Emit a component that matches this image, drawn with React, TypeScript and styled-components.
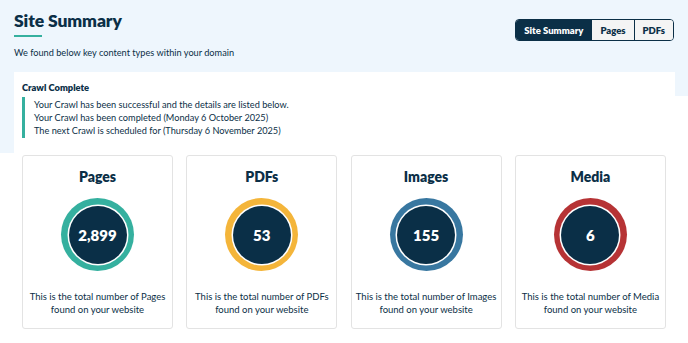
import React from 'react';
import styled, { createGlobalStyle } from 'styled-components';

interface Stat {
  title: string;
  value: string;
  ring: string;
}

const stats: Stat[] = [
  { title: 'Pages', value: '2,899', ring: '#35b09f' },
  { title: 'PDFs', value: '53', ring: '#f4b53a' },
  { title: 'Images', value: '155', ring: '#3877a0' },
  { title: 'Media', value: '6', ring: '#b63335' },
];

const GlobalStyle = createGlobalStyle`
  html, body {
    margin: 0;
    padding: 0;
    background: #ffffff;
    font-family: Lato, "Open Sans", sans-serif;
    color: #0b2f47;
  }
`;

const Page = styled.div`
  position: relative;
  width: 688px;
  height: 343px;
  overflow: hidden;
`;

const Backdrop = styled.div`
  position: absolute;
  inset: 0 0 auto 0;
  height: 153px;
  background: #eef6fd;
  clip-path: polygon(0 0, 100% 0, 100% 96px, 98% 96px, 98% 100%, 0 100%);
  z-index: 0;
`;

const Content = styled.div`
  position: relative;
  z-index: 1;
  padding: 0 14px;
`;

const Header = styled.header`
  display: flex;
  justify-content: space-between;
  align-items: flex-start;
  height: 72px;
`;

const TitleBlock = styled.div`
  padding-top: 10px;
`;

const Title = styled.h1`
  margin: 0;
  font-size: 17.5px;
  font-weight: 800;
  line-height: 22px;
  letter-spacing: -0.1px;
`;

const Underline = styled.div`
  width: 28px;
  height: 2px;
  margin-top: 3px;
  background: #35b09f;
`;

const Subtitle = styled.p`
  margin: 9px 0 0;
  font-size: 9.2px;
  line-height: 13px;
`;

const Tabs = styled.div`
  display: flex;
  margin-top: 19px;
  border: 1px solid #0b2f47;
  border-radius: 4px;
  overflow: hidden;
`;

const Tab = styled.button<{ $active?: boolean }>`
  height: 20px;
  padding: 0 8px;
  border: 0;
  border-left: ${({ $active }) => ($active ? '0' : '1px solid #0b2f47')};
  background: ${({ $active }) => ($active ? '#0b2f47' : '#f4f4f4')};
  color: ${({ $active }) => ($active ? '#ffffff' : '#0b2f47')};
  font-family: inherit;
  font-size: 9.5px;
  font-weight: 800;
  cursor: pointer;
`;

const CrawlPanel = styled.section`
  width: 661px;
  height: 81px;
  padding: 9px 8px 0;
  box-sizing: border-box;
  background: #ffffff;
`;

const CrawlTitle = styled.h2`
  margin: 0;
  font-size: 9.3px;
  font-weight: 800;
  line-height: 13px;
`;

const CrawlNotes = styled.div`
  margin-top: 3px;
  padding: 1px 0 1px 9px;
  border-left: 3px solid #35b09f;
  font-size: 9.2px;
  line-height: 13px;
`;

const Cards = styled.div`
  display: grid;
  grid-template-columns: repeat(4, 151px);
  gap: 13.3px;
  padding: 2px 22px 0;
`;

const Card = styled.article`
  height: 174px;
  box-sizing: border-box;
  border: 1px solid #e3e3e3;
  border-radius: 3px;
  display: flex;
  flex-direction: column;
  align-items: center;
  padding-top: 12px;
`;

const CardTitle = styled.h3`
  margin: 0;
  font-size: 14px;
  font-weight: 800;
  line-height: 18px;
`;

const Ring = styled.div<{ $color: string }>`
  width: 73px;
  height: 73px;
  margin-top: 12px;
  border-radius: 50%;
  background: ${({ $color }) => $color};
  display: flex;
  align-items: center;
  justify-content: center;
`;

const Core = styled.div`
  width: 58px;
  height: 58px;
  border-radius: 50%;
  background: #0a2f47;
  box-shadow: 0 0 0 1.5px #ffffff;
  display: flex;
  align-items: center;
  justify-content: center;
  color: #ffffff;
  font-size: 15px;
  font-weight: 800;
`;

const CardText = styled.p`
  margin: 19px 0 0;
  text-align: center;
  white-space: nowrap;
  font-size: 9.5px;
  line-height: 13px;
`;

export default function App() {
  return (
    <Page>
      <GlobalStyle />
      <Backdrop />
      <Content>
        <Header>
          <TitleBlock>
            <Title>Site Summary</Title>
            <Underline />
            <Subtitle>We found below key content types within your domain</Subtitle>
          </TitleBlock>
          <Tabs>
            <Tab $active>Site Summary</Tab>
            <Tab>Pages</Tab>
            <Tab>PDFs</Tab>
          </Tabs>
        </Header>
        <CrawlPanel>
          <CrawlTitle>Crawl Complete</CrawlTitle>
          <CrawlNotes>
            <div>Your Crawl has been successful and the details are listed below.</div>
            <div>Your Crawl has been completed (Monday 6 October 2025)</div>
            <div>The next Crawl is scheduled for (Thursday 6 November 2025)</div>
          </CrawlNotes>
        </CrawlPanel>
      </Content>
      <Cards>
        {stats.map((s) => (
          <Card key={s.title}>
            <CardTitle>{s.title}</CardTitle>
            <Ring $color={s.ring}>
              <Core>{s.value}</Core>
            </Ring>
            <CardText>
              This is the total number of {s.title}
              <br />
              found on your website
            </CardText>
          </Card>
        ))}
      </Cards>
    </Page>
  );
}
